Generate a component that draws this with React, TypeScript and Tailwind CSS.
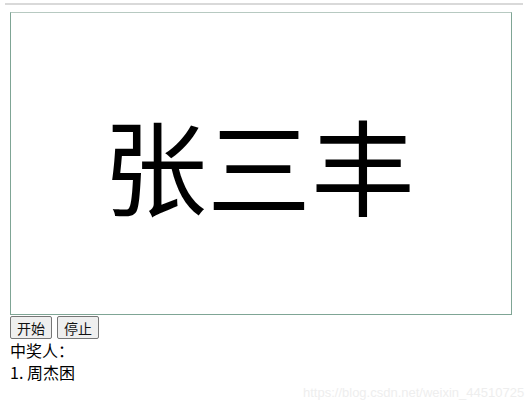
export default function App() {
  return (
    <div className="w-[528px] h-[407px] bg-white relative overflow-hidden" style={{ fontFamily: '"Microsoft YaHei", "Noto Sans CJK SC", sans-serif' }}>
      <div className="h-[3px]" />
      <div className="mx-[5px] h-[2px] bg-[#d9d9d9]" />
      <div className="pl-[10px] pt-[7px]">
        <div className="w-[502px] h-[303px] border border-[#7fa595] border-t-[#b7c9c1] flex items-center justify-center">
          <span className="text-[104px] leading-none text-black pt-[1px] pr-[4px]">张三丰</span>
        </div>
        <div className="flex gap-[5px] pt-[1px]">
          <button className="h-[23px] px-[6px] text-[14px] leading-none text-[#111] bg-[#efefef] border border-[#767676] rounded-[2px]">开始</button>
          <button className="h-[23px] px-[6px] text-[14px] leading-none text-[#111] bg-[#efefef] border border-[#767676] rounded-[2px]">停止</button>
        </div>
        <div className="text-[16px] leading-[22px] text-black">中奖人：</div>
        <div className="text-[16px] leading-[22px] text-black">1. 周杰困</div>
      </div>
      <div className="absolute left-[303px] top-[383px] text-[13px] text-[#eeeeee]" style={{ fontFamily: '"Liberation Sans", sans-serif' }}>https://blog.csdn.net/weixin_44510725</div>
    </div>
  );
}
